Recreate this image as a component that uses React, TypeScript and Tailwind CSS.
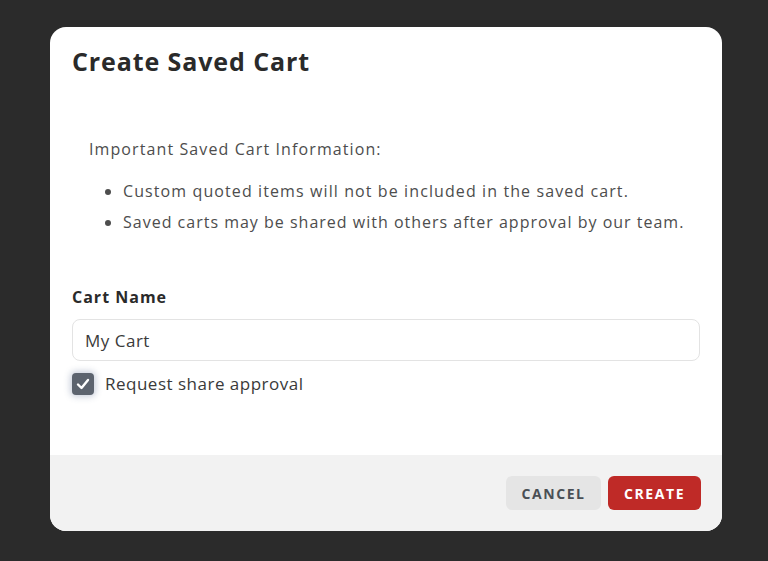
import { useState } from 'react';

export default function App() {
  const [name, setName] = useState('My Cart');
  const [share, setShare] = useState(true);

  return (
    <div className="min-h-[561px] w-full bg-[#2b2b2b] flex items-start justify-center pt-[27px] pl-[4px] font-['Open_Sans',sans-serif]">
      <div className="w-[672px] h-[504px] bg-white rounded-[16px] overflow-hidden flex flex-col">
        <div className="flex-1 px-[22px] pt-[18px]">
          <h2 className="text-[25px] font-bold text-[#2a2a2a] leading-[32px] tracking-[0.9px]">Create Saved Cart</h2>

          <div className="mt-[60px] pl-[17px] text-[16px] text-[#4d4d4d] leading-[24px]">
            <p className="tracking-[1.1px]">Important Saved Cart Information:</p>
            <ul className="mt-[18px] list-disc pl-[34px] space-y-[7px]">
              <li className="tracking-[1.1px]">Custom quoted items will not be included in the saved cart.</li>
              <li className="tracking-[1px]">Saved carts may be shared with others after approval by our team.</li>
            </ul>
          </div>

          <label className="block mt-[51px] text-[16px] font-bold text-[#2a2a2a] leading-[24px] tracking-[1px]">Cart Name</label>
          <input
            type="text" value={name}
            onChange={e => setName(e.target.value)}
            className="mt-[10px] w-full h-[42px] px-[12px] bg-white border border-[#e3e3e3] rounded-[8px] text-[17px] text-[#3a3a3a] tracking-[0.5px] focus:outline-none"
          />
          <label className="mt-[10px] flex items-center gap-[11px] cursor-pointer">
            <button
              type="button"
              onClick={() => setShare(s => !s)}
              className={`w-[22px] h-[22px] rounded-[4px] flex items-center justify-center shadow-[0_0_6px_2px_rgba(80,100,140,0.3)] ${share ? 'bg-[#5c636e]' : 'bg-white border border-[#bbb]'}`}
            >
              {share && (
                <svg width="16" height="16" viewBox="0 0 16 16" fill="none">
                  <path d="M3 8.5 L6.5 12 L13 4" stroke="white" strokeWidth="2.4" strokeLinecap="round" strokeLinejoin="round" />
                </svg>
              )}
            </button>
            <span className="text-[17px] text-[#3a3a3a] tracking-[0.5px]">Request share approval</span>
          </label>
        </div>

        <div className="h-[76px] bg-[#f2f2f2] flex items-center justify-end gap-[7px] px-[21px]">
          <button className="h-[34px] w-[95px] rounded-[6px] bg-[#e5e5e5] text-[#4a4f55] text-[14px] font-bold tracking-[1.6px]">
            CANCEL
          </button>
          <button className="h-[34px] w-[93px] rounded-[6px] bg-[#bf2a27] text-white text-[14px] font-bold tracking-[1.6px]">
            CREATE
          </button>
        </div>
      </div>
    </div>
  );
}
